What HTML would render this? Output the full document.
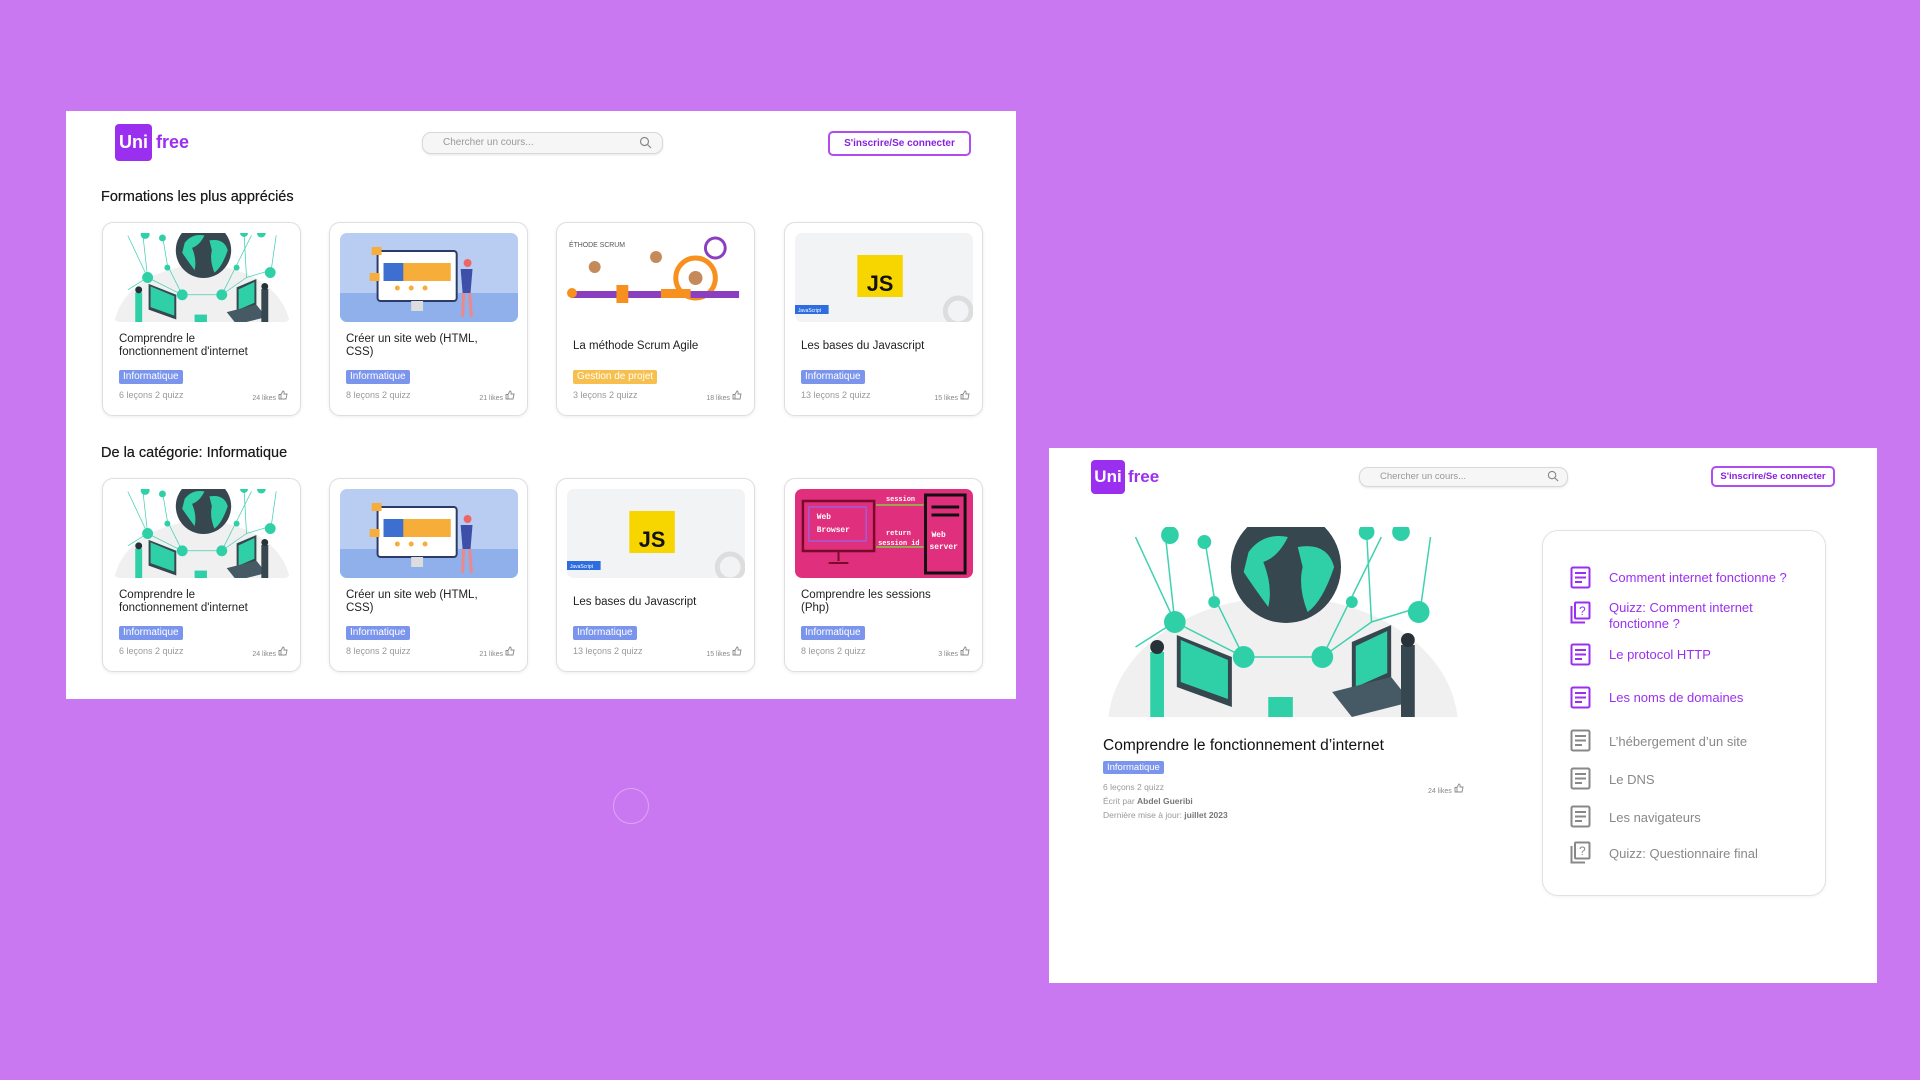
<!DOCTYPE html>
<html><head><meta charset="utf-8"><style>
*{margin:0;padding:0;box-sizing:border-box}
body{width:1920px;height:1080px;background:#ca78f2;font-family:"Liberation Sans",sans-serif;position:relative;overflow:hidden}
.abs{position:absolute}
.panel{position:absolute;background:#fff}
.logo{position:absolute;width:37px;height:37px;background:#9b2ff0;border-radius:4px;color:#fff;font-weight:bold;font-size:18px;line-height:37px;text-align:center}
.free{position:absolute;color:#9b2ff0;font-weight:bold;font-size:18px}
.search{position:absolute;border:1.5px solid #d8d8d8;border-radius:9px;background:#f6f6f6;color:#999;font-size:10px;padding-left:20px;box-shadow:0 1px 2px rgba(0,0,0,.1)}
.btn{position:absolute;border:2px solid #b04cf0;border-radius:5px;color:#8a1fe0;font-weight:bold;font-size:10px;text-align:center}
.card{position:absolute;width:199px;height:194px;border:1.5px solid #dedede;border-radius:11px;background:#fff;box-shadow:0 1px 3px rgba(0,0,0,.08)}
.img{position:absolute;left:10px;top:10px;width:178px;height:89px;border-radius:7px;overflow:hidden}
.img svg{width:100%;height:100%;display:block}
.t{position:absolute;left:16px;font-size:11.5px;line-height:13px;color:#222;width:170px}
.tag{position:absolute;left:16px;top:147px;height:14px;line-height:14px;padding:0 4px;font-size:10px;color:#fff;background:#7b95ec;border-radius:2px}
.meta{position:absolute;left:16px;top:167px;font-size:9px;color:#999}
.likes{position:absolute;right:12px;top:167px;font-size:7px;color:#888}
h2{position:absolute;font-size:14.5px;font-weight:normal;color:#1a1a1a;text-shadow:0 0 .4px #1a1a1a}
.item{position:absolute;left:1609px;font-size:13px;line-height:16px}
.ic{position:absolute;left:1570px;width:21px;height:23px}
</style></head><body>
<svg width="0" height="0" style="position:absolute">
<defs>
<symbol id="globe" viewBox="0 0 360 190">
<rect width="360" height="190" fill="#fff"/>
<ellipse cx="180" cy="200" rx="178" ry="130" fill="#f0f0f0"/>
<g stroke="#3fd1b0" stroke-width="1.5" fill="none">
<path d="M60 5 L70 95 L140 130 L220 130 L270 95 L265 5 M70 95 L30 10 M140 130 L110 70 L100 10 M220 130 L250 70 L280 10 M270 95 L320 80 L330 10 M70 95 L30 120"/>
</g>
<g fill="#2fd0a8">
<circle cx="65" cy="8" r="9"/><circle cx="100" cy="15" r="7"/><circle cx="70" cy="95" r="11"/><circle cx="110" cy="75" r="6"/><circle cx="140" cy="130" r="11"/><circle cx="220" cy="130" r="11"/><circle cx="250" cy="75" r="6"/><circle cx="318" cy="85" r="11"/><circle cx="265" cy="5" r="8"/><circle cx="300" cy="5" r="9"/>
</g>
<circle cx="183" cy="40" r="56" fill="#37474f"/>
<path d="M145 25 Q160 5 185 10 Q175 30 160 35 Q170 60 165 80 Q150 60 140 45Z M195 20 Q225 15 232 40 Q220 75 205 85 Q195 60 200 40Z" fill="#2fd0a8"/>
<polygon points="72,108 128,130 128,180 72,160" fill="#37474f"/>
<polygon points="76,113 124,133 124,172 76,155" fill="#2fd0a8"/>
<polygon points="250,115 290,98 290,150 250,165" fill="#37474f"/>
<polygon points="254,119 286,104 286,146 254,160" fill="#2fd0a8"/>
<polygon points="230,165 290,150 310,175 250,190" fill="#455a64"/>
<rect x="165" y="170" width="25" height="25" fill="#2fd0a8"/>
<rect x="45" y="125" width="14" height="65" fill="#2fd0a8"/>
<circle cx="52" cy="120" r="7" fill="#263238"/>
<rect x="300" y="118" width="14" height="72" fill="#37474f"/>
<circle cx="307" cy="113" r="7" fill="#263238"/>
</symbol>
<symbol id="web" viewBox="0 0 180 89">
<rect width="180" height="89" fill="#b9cdf2"/>
<rect y="60" width="180" height="29" fill="#8fb0ea"/>
<rect x="38" y="18" width="80" height="50" rx="3" fill="#fff" stroke="#2b3a67" stroke-width="2"/>
<rect x="44" y="30" width="68" height="18" fill="#f7ad3a"/>
<rect x="44" y="30" width="20" height="18" fill="#3d6fd0"/>
<g fill="#f7ad3a"><circle cx="58" cy="55" r="2.5"/><circle cx="72" cy="55" r="2.5"/><circle cx="86" cy="55" r="2.5"/></g>
<rect x="72" y="68" width="12" height="10" fill="#ddd"/>
<rect x="32" y="14" width="10" height="8" fill="#f7ad3a"/>
<rect x="30" y="40" width="10" height="8" fill="#f7ad3a"/>
<circle cx="129" cy="30" r="4" fill="#e66"/>
<path d="M122 36 L134 36 L132 60 L124 60Z" fill="#3d4fa8"/>
<path d="M125 60 L124 84 M131 60 L133 84" stroke="#e88" stroke-width="3"/>
</symbol>
<symbol id="js" viewBox="0 0 180 89">
<rect width="180" height="89" fill="#f1f3f5"/>
<rect x="63" y="22" width="46" height="42" fill="#f7d600"/>
<text x="86" y="58" font-family="Liberation Sans" font-weight="bold" font-size="22" text-anchor="middle" fill="#111">JS</text>
<rect x="0" y="72" width="34" height="9" fill="#2d6de0"/>
<text x="3" y="79" font-family="Liberation Sans" font-size="5" fill="#fff">JavaScript</text>
<circle cx="165" cy="78" r="13" fill="none" stroke="#ddd" stroke-width="5"/>
</symbol>
<symbol id="scrum" viewBox="0 0 180 89">
<rect width="180" height="89" fill="#fff"/>
<text x="2" y="14" font-family="Liberation Sans" font-size="7" fill="#555">ÉTHODE SCRUM</text>
<circle cx="130" cy="45" r="20" fill="none" stroke="#f7901e" stroke-width="5"/>
<circle cx="150" cy="15" r="10" fill="none" stroke="#8a3fc0" stroke-width="3"/>
<rect x="4" y="58" width="170" height="7" fill="#8a3fc0"/>
<rect x="50" y="52" width="12" height="18" fill="#f7901e"/>
<rect x="95" y="56" width="30" height="9" fill="#f7901e"/>
<circle cx="28" cy="34" r="6" fill="#c58a5a"/><circle cx="90" cy="24" r="6" fill="#c58a5a"/><circle cx="130" cy="45" r="7" fill="#c58a5a"/>
<circle cx="5" cy="60" r="5" fill="#f7901e"/>
</symbol>
<symbol id="sess" viewBox="0 0 180 89">
<rect width="180" height="89" rx="6" fill="#e02f7c"/>
<rect x="8" y="12" width="72" height="50" fill="none" stroke="#7a0a2a" stroke-width="2.5"/>
<rect x="14" y="18" width="58" height="34" fill="none" stroke="#a05cd8" stroke-width="1.5"/>
<text x="22" y="30" font-family="Liberation Mono" font-size="8" font-weight="bold" fill="#fff">Web</text>
<text x="22" y="43" font-family="Liberation Mono" font-size="8" font-weight="bold" fill="#fff">Browser</text>
<path d="M44 62 V72 M34 74 H54" stroke="#7a0a2a" stroke-width="2"/>
<rect x="132" y="6" width="40" height="78" fill="none" stroke="#111" stroke-width="3"/>
<path d="M138 18 H166 M138 26 H166" stroke="#111" stroke-width="3"/>
<text x="138" y="48" font-family="Liberation Mono" font-size="8" font-weight="bold" fill="#fff">Web</text>
<text x="136" y="60" font-family="Liberation Mono" font-size="8" font-weight="bold" fill="#fff">server</text>
<path d="M82 16 H130 M82 58 H130" stroke="#8c4" stroke-width="1.5"/>
<text x="92" y="12" font-family="Liberation Mono" font-size="7" font-weight="bold" fill="#fff">session</text>
<text x="92" y="46" font-family="Liberation Mono" font-size="7" font-weight="bold" fill="#fff">return</text>
<text x="84" y="56" font-family="Liberation Mono" font-size="7" font-weight="bold" fill="#fff">session id</text>
</symbol>
<symbol id="doc" viewBox="0 0 21 23"><rect x="1.5" y="1.5" width="18" height="20" rx="1.5" fill="none" stroke="currentColor" stroke-width="2"/><path d="M5 7H16M5 11.5H16M5 16H12" stroke="currentColor" stroke-width="2"/></symbol>
<symbol id="quiz" viewBox="0 0 21 23"><rect x="5" y="1.5" width="14.5" height="16" rx="1" fill="none" stroke="currentColor" stroke-width="2"/><path d="M1.5 5V21.5H15" fill="none" stroke="currentColor" stroke-width="2"/><text x="12.3" y="14" font-family="Liberation Sans" font-size="12" text-anchor="middle" fill="currentColor">?</text></symbol>
<symbol id="thumb" viewBox="0 0 10 10"><path d="M1 4.5H3V9H1Z M3 4.5 L5 1 Q6.5 1 6 4 H9 L8 9 H3" fill="none" stroke="#888" stroke-width="0.9"/></symbol>
</defs></svg>

<!-- LEFT PANEL -->
<div class="panel" style="left:66px;top:111px;width:950px;height:588px"></div>
<div class="logo" style="left:115px;top:124px">Uni</div>
<div class="free" style="left:156px;top:132px">free</div>
<div class="search" style="left:422px;top:132px;width:241px;height:22px;line-height:19px">Chercher un cours...</div>
<svg class="abs" style="left:639px;top:136px" width="13" height="13" viewBox="0 0 13 13"><circle cx="5.5" cy="5.5" r="4" fill="none" stroke="#888" stroke-width="1.2"/><path d="M8.5 8.5L12 12" stroke="#888" stroke-width="1.2"/></svg>
<div class="btn" style="left:828px;top:131px;width:143px;height:25px;line-height:21px">S'inscrire/Se connecter</div>

<h2 style="left:101px;top:189px">Formations les plus appréciés</h2>
<h2 style="left:101px;top:445px">De la catégorie: Informatique</h2>

<div class="card" style="left:102px;top:222px"><div class="img"><svg viewBox="0 0 360 190" preserveAspectRatio="xMidYMid slice"><use href="#globe"/></svg></div><div class="t" style="top:110px">Comprendre le<br>fonctionnement d'internet</div><div class="tag">Informatique</div><div class="meta">6 leçons 2 quizz</div><div class="likes">24 likes <svg width="10" height="10"><use href="#thumb"/></svg></div></div>
<div class="card" style="left:329px;top:222px"><div class="img"><svg viewBox="0 0 180 89" preserveAspectRatio="none"><use href="#web"/></svg></div><div class="t" style="top:110px">Créer un site web (HTML,<br>CSS)</div><div class="tag">Informatique</div><div class="meta">8 leçons 2 quizz</div><div class="likes">21 likes <svg width="10" height="10"><use href="#thumb"/></svg></div></div>
<div class="card" style="left:556px;top:222px"><div class="img"><svg viewBox="0 0 180 89" preserveAspectRatio="none"><use href="#scrum"/></svg></div><div class="t" style="top:117px">La méthode Scrum Agile</div><div class="tag" style="background:#f7c04e">Gestion de projet</div><div class="meta">3 leçons 2 quizz</div><div class="likes">18 likes <svg width="10" height="10"><use href="#thumb"/></svg></div></div>
<div class="card" style="left:784px;top:222px"><div class="img"><svg viewBox="0 0 180 89" preserveAspectRatio="none"><use href="#js"/></svg></div><div class="t" style="top:117px">Les bases du Javascript</div><div class="tag">Informatique</div><div class="meta">13 leçons 2 quizz</div><div class="likes">15 likes <svg width="10" height="10"><use href="#thumb"/></svg></div></div>

<div class="card" style="left:102px;top:478px"><div class="img"><svg viewBox="0 0 360 190" preserveAspectRatio="xMidYMid slice"><use href="#globe"/></svg></div><div class="t" style="top:110px">Comprendre le<br>fonctionnement d'internet</div><div class="tag">Informatique</div><div class="meta">6 leçons 2 quizz</div><div class="likes">24 likes <svg width="10" height="10"><use href="#thumb"/></svg></div></div>
<div class="card" style="left:329px;top:478px"><div class="img"><svg viewBox="0 0 180 89" preserveAspectRatio="none"><use href="#web"/></svg></div><div class="t" style="top:110px">Créer un site web (HTML,<br>CSS)</div><div class="tag">Informatique</div><div class="meta">8 leçons 2 quizz</div><div class="likes">21 likes <svg width="10" height="10"><use href="#thumb"/></svg></div></div>
<div class="card" style="left:556px;top:478px"><div class="img"><svg viewBox="0 0 180 89" preserveAspectRatio="none"><use href="#js"/></svg></div><div class="t" style="top:117px">Les bases du Javascript</div><div class="tag">Informatique</div><div class="meta">13 leçons 2 quizz</div><div class="likes">15 likes <svg width="10" height="10"><use href="#thumb"/></svg></div></div>
<div class="card" style="left:784px;top:478px"><div class="img"><svg viewBox="0 0 180 89" preserveAspectRatio="none"><use href="#sess"/></svg></div><div class="t" style="top:110px">Comprendre les sessions<br>(Php)</div><div class="tag">Informatique</div><div class="meta">8 leçons 2 quizz</div><div class="likes">3 likes <svg width="10" height="10"><use href="#thumb"/></svg></div></div>

<div class="abs" style="left:613px;top:788px;width:36px;height:36px;border-radius:50%;border:1px solid #dba4f6"></div>

<!-- RIGHT PANEL -->
<div class="panel" style="left:1049px;top:448px;width:828px;height:535px"></div>
<div class="logo" style="left:1091px;top:460px;width:34px;height:34px;line-height:34px;font-size:17px">Uni</div>
<div class="free" style="left:1128px;top:467px;font-size:17px">free</div>
<div class="search" style="left:1359px;top:467px;width:209px;height:20px;line-height:17px;font-size:9.5px">Chercher un cours...</div>
<svg class="abs" style="left:1547px;top:470px" width="12" height="12" viewBox="0 0 13 13"><circle cx="5.5" cy="5.5" r="4" fill="none" stroke="#888" stroke-width="1.2"/><path d="M8.5 8.5L12 12" stroke="#888" stroke-width="1.2"/></svg>
<div class="btn" style="left:1711px;top:466px;width:124px;height:21px;line-height:17px;font-size:9.5px">S'inscrire/Se connecter</div>

<svg class="abs" style="left:1106px;top:527px" width="354" height="190" viewBox="0 0 360 190" preserveAspectRatio="none"><use href="#globe"/></svg>
<div class="abs" style="left:1103px;top:737px;font-size:15.5px;color:#111">Comprendre le fonctionnement d’internet</div>
<div class="tag" style="left:1103px;top:761px;font-size:9.5px;height:13px;line-height:13px">Informatique</div>
<div class="abs" style="left:1103px;top:782px;font-size:8.5px;color:#999">6 leçons 2 quizz</div>
<div class="abs" style="left:1428px;top:783px;font-size:7px;color:#888">24 likes <svg width="10" height="10"><use href="#thumb"/></svg></div>
<div class="abs" style="left:1103px;top:796px;font-size:8.5px;color:#999">Écrit par <b style="color:#777">Abdel Gueribi</b></div>
<div class="abs" style="left:1103px;top:810px;font-size:8.5px;color:#999">Dernière mise à jour: <b style="color:#777">juillet 2023</b></div>

<div class="abs" style="left:1542px;top:530px;width:284px;height:366px;border:1.5px solid #e2e2e2;border-radius:16px;box-shadow:0 1px 3px rgba(0,0,0,.06)"></div>
<svg class="ic" style="top:566px;color:#9b2ff0"><use href="#doc"/></svg><div class="item" style="top:570px;color:#9b2ff0">Comment internet fonctionne ?</div>
<svg class="ic" style="top:601px;color:#9b2ff0"><use href="#quiz"/></svg><div class="item" style="top:600px;color:#9b2ff0">Quizz: Comment internet<br>fonctionne ?</div>
<svg class="ic" style="top:643px;color:#9b2ff0"><use href="#doc"/></svg><div class="item" style="top:647px;color:#9b2ff0">Le protocol HTTP</div>
<svg class="ic" style="top:686px;color:#9b2ff0"><use href="#doc"/></svg><div class="item" style="top:690px;color:#9b2ff0">Les noms de domaines</div>
<svg class="ic" style="top:729px;color:#888"><use href="#doc"/></svg><div class="item" style="top:734px;color:#888">L’hébergement d’un site</div>
<svg class="ic" style="top:767px;color:#888"><use href="#doc"/></svg><div class="item" style="top:772px;color:#888">Le DNS</div>
<svg class="ic" style="top:805px;color:#888"><use href="#doc"/></svg><div class="item" style="top:810px;color:#888">Les navigateurs</div>
<svg class="ic" style="top:841px;color:#888"><use href="#quiz"/></svg><div class="item" style="top:846px;color:#888">Quizz: Questionnaire final</div>
</body></html>
